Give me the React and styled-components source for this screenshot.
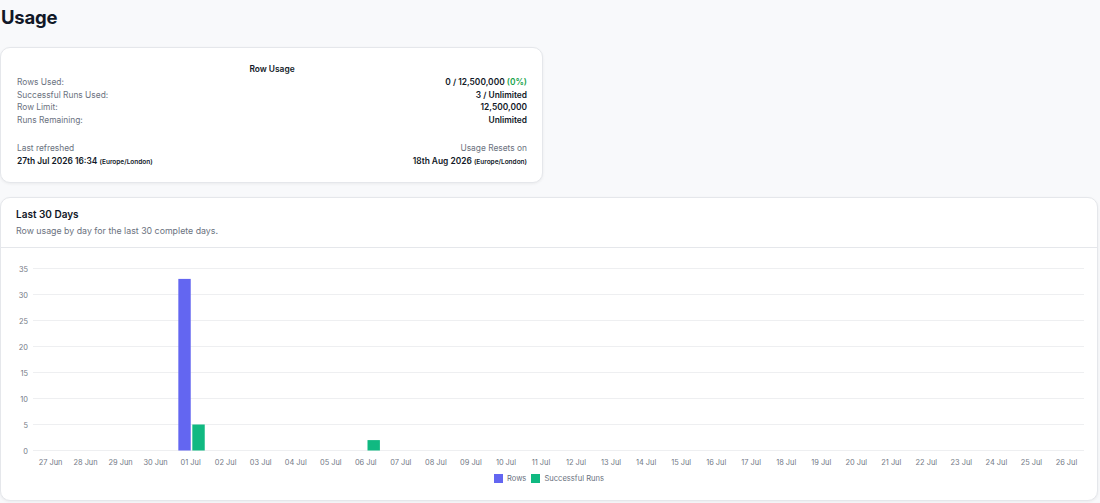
import styled, { createGlobalStyle } from "styled-components";

const GlobalStyle = createGlobalStyle`
	html, body {
		margin: 0;
		padding: 0;
		background: #f8f9fb;
		font-family: Inter, "Noto Sans", sans-serif;
		color: #111827;
	}
`;

const Page = styled.div`
	display: flex;
	flex-direction: column;
	padding: 0 2px 0 0;
	height: 503px;
	box-sizing: border-box;
`;

const Title = styled.h1`
	margin: 2px 0 0 1px;
	font-size: 18.5px;
	line-height: 30px;
	font-weight: 700;
	letter-spacing: -0.2px;
`;

const Card = styled.section`
	background: #fff;
	border: 1px solid #e5e7eb;
	border-radius: 10px;
	box-shadow: 0 1px 3px rgba(0, 0, 0, 0.06);
	box-sizing: border-box;
`;

const SummaryCard = styled(Card)`
	width: 543px;
	margin-top: 15px;
	padding: 14px 15px 13px 16px;
`;

const CardHeading = styled.div`
	text-align: center;
	font-size: 8.4px;
	font-weight: 600;
	line-height: 14px;
`;

const StatRow = styled.div`
	display: flex;
	justify-content: space-between;
	font-size: 8.4px;
	line-height: 12.5px;
`;

const StatLabel = styled.span`
	color: #6b7280;
`;

const StatValue = styled.span`
	font-weight: 600;
	color: #111827;
`;

const Percent = styled.span`
	color: #16a34a;
`;

const Footer = styled.div`
	display: flex;
	justify-content: space-between;
	margin-top: 16px;
`;

const FooterCol = styled.div`
	display: flex;
	flex-direction: column;
	align-items: ${({ $right }) => ($right ? "flex-end" : "flex-start")};
	font-size: 8.4px;
	line-height: 13px;
`;

const Zone = styled.span`
	font-size: 6.5px;
	font-weight: 600;
`;

const ChartCard = styled(Card)`
	margin-top: 14px;
	flex: 1;
	margin-bottom: 2px;
	display: flex;
	flex-direction: column;
`;

const ChartHeader = styled.div`
	padding: 9px 15px 10px;
	border-bottom: 1px solid #e5e7eb;
`;

const ChartTitle = styled.div`
	font-size: 10px;
	font-weight: 600;
	line-height: 14px;
`;

const ChartSub = styled.div`
	margin-top: 3px;
	font-size: 8.8px;
	color: #6b7280;
	line-height: 13px;
`;

const Legend = styled.div`
	display: flex;
	justify-content: center;
	gap: 5px;
	font-size: 7.6px;
	color: #6b7280;
	margin-top: 4px;
`;

const LegendItem = styled.div`
	display: flex;
	align-items: center;
	gap: 4px;
`;

const Swatch = styled.span`
	width: 9px;
	height: 9px;
	background: ${({ $color }) => $color};
`;

const BLUE = "#6366f1";
const GREEN = "#10b981";
const AXIS = "#737986";

const days = [
	"27 Jun", "28 Jun", "29 Jun", "30 Jun", "01 Jul", "02 Jul", "03 Jul", "04 Jul", "05 Jul", "06 Jul",
	"07 Jul", "08 Jul", "09 Jul", "10 Jul", "11 Jul", "12 Jul", "13 Jul", "14 Jul", "15 Jul", "16 Jul",
	"17 Jul", "18 Jul", "19 Jul", "20 Jul", "21 Jul", "22 Jul", "23 Jul", "24 Jul", "25 Jul", "26 Jul",
];

const data = { "01 Jul": { rows: 33, runs: 5 }, "06 Jul": { rows: 0, runs: 2 } };

const X0 = 32;
const X1 = 1083;
const BAND = (X1 - X0) / 30;
const Y0 = 202.5;
const UNIT = 5.2;

const Chart = () => (
	<svg width="1096" height="222" style={{ display: "block" }}>
		{[0, 5, 10, 15, 20, 25, 30, 35].map((v) => {
			const y = Y0 - v * UNIT;
			return (
				<g key={v}>
					<line x1={X0} x2={X1} y1={y} y2={y} stroke="#eeeff1" strokeWidth="1" />
					<text x={27} y={y + 3} textAnchor="end" fontSize="7.4" fill={AXIS} fontFamily="Inter, sans-serif">
						{v}
					</text>
				</g>
			);
		})}
		{days.map((d, i) => {
			const start = X0 + i * BAND;
			const item = data[d];
			return (
				<g key={d}>
					<text x={start + BAND / 2} y={217} textAnchor="middle" fontSize="7.4" fill={AXIS} fontFamily="Inter, sans-serif">
						{d}
					</text>
					{item && item.rows > 0 && (
						<rect x={start + 5.2} y={Y0 - item.rows * UNIT} width={12.4} height={item.rows * UNIT} fill={BLUE} />
					)}
					{item && item.runs > 0 && (
						<rect x={start + 19.2} y={Y0 - item.runs * UNIT} width={12.4} height={item.runs * UNIT} fill={GREEN} />
					)}
				</g>
			);
		})}
	</svg>
);

const App = () => (
	<>
		<GlobalStyle />
		<Page>
			<Title>Usage</Title>
			<SummaryCard>
				<CardHeading>Row Usage</CardHeading>
				<StatRow>
					<StatLabel>Rows Used:</StatLabel>
					<StatValue>
						0 / 12,500,000 <Percent>(0%)</Percent>
					</StatValue>
				</StatRow>
				<StatRow>
					<StatLabel>Successful Runs Used:</StatLabel>
					<StatValue>3 / Unlimited</StatValue>
				</StatRow>
				<StatRow>
					<StatLabel>Row Limit:</StatLabel>
					<StatValue>12,500,000</StatValue>
				</StatRow>
				<StatRow>
					<StatLabel>Runs Remaining:</StatLabel>
					<StatValue>Unlimited</StatValue>
				</StatRow>
				<Footer>
					<FooterCol>
						<StatLabel>Last refreshed</StatLabel>
						<StatValue>
							27th Jul 2026 16:34 <Zone>(Europe/London)</Zone>
						</StatValue>
					</FooterCol>
					<FooterCol $right>
						<StatLabel>Usage Resets on</StatLabel>
						<StatValue>
							18th Aug 2026 <Zone>(Europe/London)</Zone>
						</StatValue>
					</FooterCol>
				</Footer>
			</SummaryCard>
			<ChartCard>
				<ChartHeader>
					<ChartTitle>Last 30 Days</ChartTitle>
					<ChartSub>Row usage by day for the last 30 complete days.</ChartSub>
				</ChartHeader>
				<Chart />
				<Legend>
					<LegendItem>
						<Swatch $color={BLUE} />
						Rows
					</LegendItem>
					<LegendItem>
						<Swatch $color={GREEN} />
						Successful Runs
					</LegendItem>
				</Legend>
			</ChartCard>
		</Page>
	</>
);

export default App;
